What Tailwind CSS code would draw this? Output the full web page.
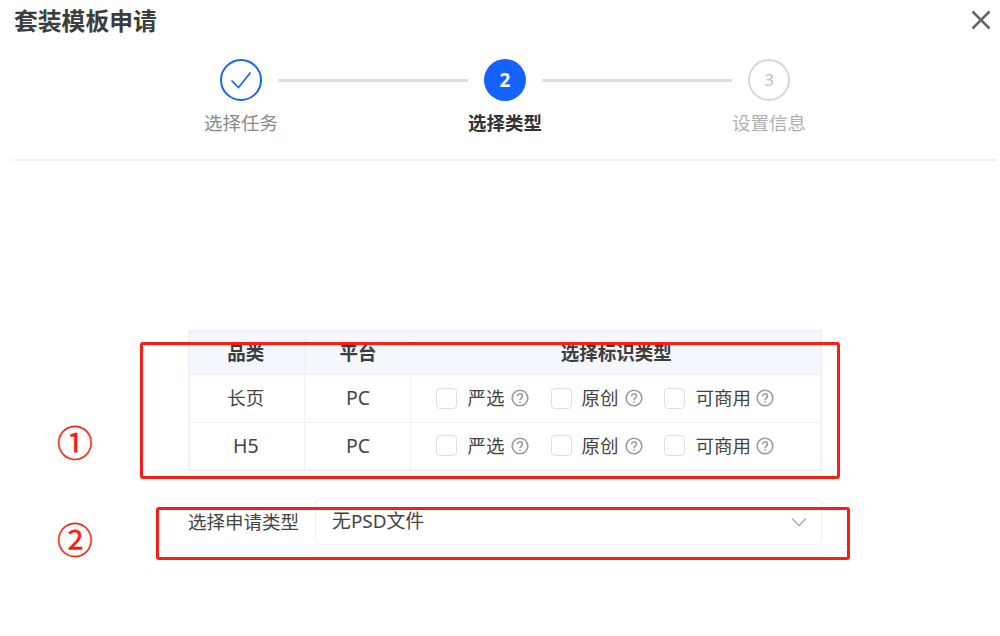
<!DOCTYPE html>
<html lang="zh-CN">
<head>
  <meta charset="UTF-8" />
  <title>套装模板申请</title>
  <script src="https://cdn.jsdelivr.net/npm/@tailwindcss/browser@4"></script>
</head>
<body class="bg-white text-[#444] font-['Noto_Sans','Noto_Sans_CJK_SC',sans-serif]">
  <div class="relative w-[1000px] h-[636px] overflow-hidden px-[14px]">

    <!-- Header -->
    <div class="flex justify-between items-start h-[44px]">
      <h1 class="text-[23.8px] leading-[42px] font-bold text-[#3d3d3d]">套装模板申请</h1>
      <svg class="w-[20px] h-[20px] mt-[10px] -mr-[5px] text-[#666]" viewBox="0 0 20 20" fill="none" stroke="currentColor" stroke-width="2.5"><path d="M1.5 1.5 18.5 18.5M18.5 1.5 1.5 18.5" /></svg>
    </div>

    <!-- Steps -->
    <div class="flex justify-center items-start mt-[15px] h-[102px] border-b-2 border-[#edf0f3] w-[982px]">
      <div class="w-[74px] flex flex-col items-center">
        <div class="w-[42px] h-[42px] rounded-full border-2 border-[#1662ff] flex items-center justify-center">
          <svg class="w-[22px] h-[22px] text-[#1662ff]" viewBox="0 0 22 22" fill="none" stroke="currentColor" stroke-width="1.7"><path d="M1.5 11.5 8.5 18.5 20.5 3.5" /></svg>
        </div>
        <div class="mt-[8px] text-[18.5px] leading-[28px] whitespace-nowrap text-[#8a8a8a]">选择任务</div>
      </div>
      <div class="w-[190px] h-[3px] bg-[#dedede] mt-[20px]"></div>
      <div class="w-[74px] flex flex-col items-center">
        <div class="w-[42px] h-[42px] rounded-full bg-[#1662ff] flex items-center justify-center text-white font-bold text-[19px]">2</div>
        <div class="mt-[8px] text-[18.5px] leading-[28px] whitespace-nowrap font-bold text-[#333]">选择类型</div>
      </div>
      <div class="w-[190px] h-[3px] bg-[#dedede] mt-[20px]"></div>
      <div class="w-[74px] flex flex-col items-center">
        <div class="w-[42px] h-[42px] rounded-full border-2 border-[#d6d6d6] flex items-center justify-center text-[#c0c0c0] text-[17px]">3</div>
        <div class="mt-[8px] text-[18.5px] leading-[28px] whitespace-nowrap text-[#b0b0b0]">设置信息</div>
      </div>
    </div>

    <!-- Type table -->
    <table class="ml-[174px] mt-[169px] w-[634px] table-fixed border-collapse border-2 border-[#eef1f6] text-[18.5px]">
      <thead class="bg-[#f4f7fd] text-[#3d3d3d]">
        <tr class="h-[43px]">
          <th class="w-[115px] border border-[#eef1f6] font-bold pt-[1px] pr-[2px]">品类</th>
          <th class="w-[106px] border border-[#eef1f6] font-bold pt-[1px] pl-[2px]">平台</th>
          <th class="border border-[#eef1f6] font-bold pt-[1px] pl-[2px]">选择标识类型</th>
        </tr>
      </thead>
      <tbody class="text-center">
        <tr class="h-[48px]">
          <td class="border border-[#eef1f6] pr-[2px]">长页</td>
          <td class="border border-[#eef1f6] pl-[2px] text-[19.5px]">PC</td>
          <td class="border border-[#eef1f6]">
            <div class="flex items-center pl-[25px]">
              <span class="w-[21px] h-[21px] rounded-[4px] border border-[#dce1e8]"></span>
              <span class="ml-[11px]">严选</span>
              <svg class="ml-[6px] w-[18px] h-[18px] text-[#999]" viewBox="0 0 18 18" fill="none" stroke="currentColor" stroke-width="1.6"><circle cx="9" cy="9" r="7.8" /><path d="M6.6 7.2a2.4 2.4 0 1 1 3.7 2c-.9.6-1.3 1-1.3 2" /><path d="M9 12.6v1.2" /></svg>
              <span class="ml-[22px] w-[21px] h-[21px] rounded-[4px] border border-[#dce1e8]"></span>
              <span class="ml-[10px]">原创</span>
              <svg class="ml-[6px] w-[18px] h-[18px] text-[#999]" viewBox="0 0 18 18" fill="none" stroke="currentColor" stroke-width="1.6"><circle cx="9" cy="9" r="7.8" /><path d="M6.6 7.2a2.4 2.4 0 1 1 3.7 2c-.9.6-1.3 1-1.3 2" /><path d="M9 12.6v1.2" /></svg>
              <span class="ml-[21px] w-[21px] h-[21px] rounded-[4px] border border-[#dce1e8]"></span>
              <span class="ml-[11px]">可商用</span>
              <svg class="ml-[5px] w-[18px] h-[18px] text-[#999]" viewBox="0 0 18 18" fill="none" stroke="currentColor" stroke-width="1.6"><circle cx="9" cy="9" r="7.8" /><path d="M6.6 7.2a2.4 2.4 0 1 1 3.7 2c-.9.6-1.3 1-1.3 2" /><path d="M9 12.6v1.2" /></svg>
            </div>
          </td>
        </tr>
        <tr class="h-[48px]">
          <td class="border border-[#eef1f6] pr-[2px] text-[19.5px]">H5</td>
          <td class="border border-[#eef1f6] pl-[2px] text-[19.5px]">PC</td>
          <td class="border border-[#eef1f6]">
            <div class="flex items-center pl-[25px]">
              <span class="w-[21px] h-[21px] rounded-[4px] border border-[#dce1e8]"></span>
              <span class="ml-[11px]">严选</span>
              <svg class="ml-[6px] w-[18px] h-[18px] text-[#999]" viewBox="0 0 18 18" fill="none" stroke="currentColor" stroke-width="1.6"><circle cx="9" cy="9" r="7.8" /><path d="M6.6 7.2a2.4 2.4 0 1 1 3.7 2c-.9.6-1.3 1-1.3 2" /><path d="M9 12.6v1.2" /></svg>
              <span class="ml-[22px] w-[21px] h-[21px] rounded-[4px] border border-[#dce1e8]"></span>
              <span class="ml-[10px]">原创</span>
              <svg class="ml-[6px] w-[18px] h-[18px] text-[#999]" viewBox="0 0 18 18" fill="none" stroke="currentColor" stroke-width="1.6"><circle cx="9" cy="9" r="7.8" /><path d="M6.6 7.2a2.4 2.4 0 1 1 3.7 2c-.9.6-1.3 1-1.3 2" /><path d="M9 12.6v1.2" /></svg>
              <span class="ml-[21px] w-[21px] h-[21px] rounded-[4px] border border-[#dce1e8]"></span>
              <span class="ml-[11px]">可商用</span>
              <svg class="ml-[5px] w-[18px] h-[18px] text-[#999]" viewBox="0 0 18 18" fill="none" stroke="currentColor" stroke-width="1.6"><circle cx="9" cy="9" r="7.8" /><path d="M6.6 7.2a2.4 2.4 0 1 1 3.7 2c-.9.6-1.3 1-1.3 2" /><path d="M9 12.6v1.2" /></svg>
            </div>
          </td>
        </tr>
      </tbody>
    </table>

    <!-- Apply type select -->
    <div class="flex items-center ml-[174px] mt-[27px] w-[634px] text-[18.5px]">
      <span class="w-[127px] pr-[16px] whitespace-nowrap">选择申请类型</span>
      <div class="flex-1 h-[47px] rounded-[6px] border border-[#eef0f3] flex items-center justify-between pl-[16px] pr-[14px]">
        <span class="text-[18.9px]">无PSD文件</span>
        <svg class="w-[16px] h-[10px] text-[#aaa]" viewBox="0 0 16 10" fill="none" stroke="currentColor" stroke-width="1.4"><path d="M1 1.5 8 8.5 15 1.5" /></svg>
      </div>
    </div>

    <!-- Red annotations over the screenshot -->
    <div class="absolute left-[140px] top-[342px] w-[700px] h-[137px] border-[3px] border-[#fb1c12] rounded-[3px]"></div>
    <div class="absolute left-[156px] top-[507px] w-[694px] h-[53px] border-[3px] border-[#fb1c12] rounded-[3px]"></div>
    <div class="absolute left-[55px] top-[421px] w-[40px] h-[46px] text-[36px] leading-[46px] text-center text-[#fb1c12] [-webkit-text-stroke:0.4px_#fb1c12]">①</div>
    <div class="absolute left-[55px] top-[518px] w-[40px] h-[46px] text-[36px] leading-[46px] text-center text-[#fb1c12] [-webkit-text-stroke:0.4px_#fb1c12]">②</div>
  </div>
</body>
</html>
